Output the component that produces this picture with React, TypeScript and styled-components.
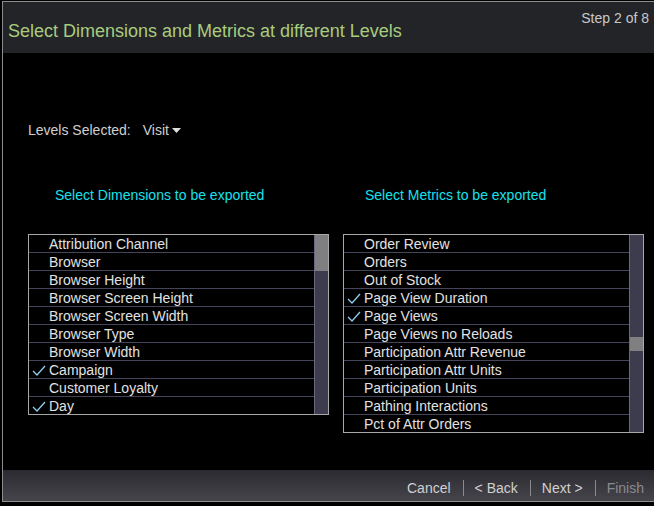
import React from "react";
import styled, { createGlobalStyle } from "styled-components";

const Global = createGlobalStyle`
  html, body { margin: 0; padding: 0; background: #000; overflow: hidden; }
  body { font-family: "Liberation Sans", Arial, sans-serif; }
`;

const Dialog = styled.div`
  margin: 1px 0 0 2px;
  width: 652px;
  height: 501px;
  border: 1px solid #8c8c8c;
  border-right: none;
  background: #000;
  display: flex;
  flex-direction: column;
  box-sizing: border-box;
`;

const Header = styled.div`
  height: 51px;
  background: #232428;
  position: relative;
  display: flex;
  align-items: flex-end;
  padding: 0 0 12px 5px;
  box-sizing: border-box;
`;

const Title = styled.div`
  color: #a9cc7e;
  font-size: 18px;
  line-height: 20px;
`;

const Step = styled.div`
  position: absolute;
  top: 8px;
  right: 5px;
  color: #c8c8c8;
  font-size: 14px;
`;

const Body = styled.div`
  flex: 1;
  padding: 69px 0 0 25px;
  display: flex;
  flex-direction: column;
`;

const LevelsRow = styled.div`
  display: flex;
  align-items: center;
  color: #d0d0d0;
  font-size: 14px;
  gap: 12px;
`;

const Dropdown = styled.span`
  display: inline-flex;
  align-items: center;
  gap: 3px;
`;

const Columns = styled.div`
  display: flex;
  gap: 14px;
  margin-top: 49px;
`;

const Column = styled.div`
  width: 301px;
  display: flex;
  flex-direction: column;
`;

const Heading = styled.div<{ $pad: number }>`
  color: #19e0ec;
  font-size: 14px;
  padding-left: ${(p) => p.$pad}px;
  height: 16px;
  line-height: 16px;
`;

const ListBox = styled.div`
  margin-top: 31px;
  border: 1px solid #a8a8a8;
  display: flex;
  box-sizing: border-box;
  background: #000;
`;

const Rows = styled.div`
  flex: 1;
  display: flex;
  flex-direction: column;
`;

const Row = styled.div`
  height: 18px;
  box-sizing: border-box;
  border-bottom: 1px solid #46445a;
  display: flex;
  align-items: center;
  color: #e2e2e2;
  font-size: 14px;
  position: relative;
  padding-left: 20px;
  &:last-child { border-bottom: none; height: 17px; }
`;

const Check = styled.svg`
  position: absolute;
  left: 3px;
  top: 4px;
`;

const Track = styled.div`
  width: 13px;
  background: #3d3b4e;
  border-left: 1px solid #6a6880;
  position: relative;
`;

const Thumb = styled.div`
  position: absolute;
  left: 0;
  right: 0;
  background: #7f7f82;
`;

const Footer = styled.div`
  height: 31px;
  margin-top: auto;
  background: linear-gradient(#2b2a30, #46454c);
  display: flex;
  align-items: center;
  justify-content: flex-end;
  padding: 5px 10px 0 0;
  font-size: 14px;
  color: #d0d0d0;
  box-sizing: border-box;
`;

const FooterButton = styled.span<{ $disabled?: boolean }>`
  color: ${(p) => (p.$disabled ? "#8a8a8e" : "#d0d0d0")};
`;

const Sep = styled.span`
  width: 1px;
  height: 16px;
  background: #8a8a8e;
  margin: 0 11px 0 12px;
`;

const CheckIcon = () => (
  <Check width="14" height="11" viewBox="0 0 14 11">
    <path d="M1 6 L5 10 L13 1" fill="none" stroke="#8ccfee" strokeWidth="1.3" />
  </Check>
);

type Item = { label: string; checked?: boolean };

const dims: Item[] = [
  { label: "Attribution Channel" },
  { label: "Browser" },
  { label: "Browser Height" },
  { label: "Browser Screen Height" },
  { label: "Browser Screen Width" },
  { label: "Browser Type" },
  { label: "Browser Width" },
  { label: "Campaign", checked: true },
  { label: "Customer Loyalty" },
  { label: "Day", checked: true },
];

const metrics: Item[] = [
  { label: "Order Review" },
  { label: "Orders" },
  { label: "Out of Stock" },
  { label: "Page View Duration", checked: true },
  { label: "Page Views", checked: true },
  { label: "Page Views no Reloads" },
  { label: "Participation Attr Revenue" },
  { label: "Participation Attr Units" },
  { label: "Participation Units" },
  { label: "Pathing Interactions" },
  { label: "Pct of Attr Orders" },
];

const List = ({ items, thumbTop, thumbHeight }: { items: Item[]; thumbTop: number; thumbHeight: number }) => (
  <ListBox>
    <Rows>
      {items.map((it) => (
        <Row key={it.label}>
          {it.checked && <CheckIcon />}
          {it.label}
        </Row>
      ))}
    </Rows>
    <Track>
      <Thumb style={{ top: thumbTop, height: thumbHeight }} />
    </Track>
  </ListBox>
);

export default function App() {
  return (
    <>
      <Global />
      <Dialog>
        <Header>
          <Title>Select Dimensions and Metrics at different Levels</Title>
          <Step>Step 2 of 8</Step>
        </Header>
        <Body>
          <LevelsRow>
            <span>Levels Selected:</span>
            <Dropdown>
              Visit
              <svg width="9" height="5" viewBox="0 0 9 5">
                <path d="M0 0 L9 0 L4.5 5 Z" fill="#e0e0e0" />
              </svg>
            </Dropdown>
          </LevelsRow>
          <Columns>
            <Column>
              <Heading $pad={27}>Select Dimensions to be exported</Heading>
              <List items={dims} thumbTop={0} thumbHeight={36} />
            </Column>
            <Column>
              <Heading $pad={22}>Select Metrics to be exported</Heading>
              <List items={metrics} thumbTop={102} thumbHeight={14} />
            </Column>
          </Columns>
        </Body>
        <Footer>
          <FooterButton>Cancel</FooterButton>
          <Sep />
          <FooterButton>&lt; Back</FooterButton>
          <Sep />
          <FooterButton>Next &gt;</FooterButton>
          <Sep />
          <FooterButton $disabled>Finish</FooterButton>
        </Footer>
      </Dialog>
    </>
  );
}
